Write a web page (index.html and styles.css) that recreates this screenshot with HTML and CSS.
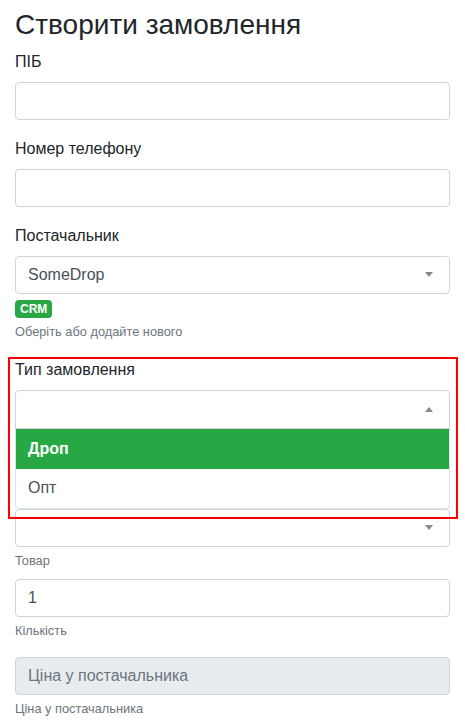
FILE: index.html
```html
<!DOCTYPE html>
<html lang="uk">
<head>
<meta charset="utf-8">
<title>Створити замовлення</title>
<link rel="stylesheet" href="styles.css">
</head>
<body>
<div class="container">
  <h3 class="title">Створити замовлення</h3>

  <div class="form-group">
    <label class="label">ПІБ</label>
    <input class="form-control" type="text">
  </div>

  <div class="form-group">
    <label class="label">Номер телефону</label>
    <input class="form-control" type="text">
  </div>

  <div class="form-group">
    <label class="label">Постачальник</label>
    <div class="select">
      <span class="select-value">SomeDrop</span>
      <span class="arrow arrow-down"></span>
    </div>
    <div class="badge-row"><span class="badge">CRM</span></div>
    <small class="form-text">Оберіть або додайте нового</small>
  </div>

  <div class="form-group group-type">
    <label class="label">Тип замовлення</label>
    <div class="select select-open">
      <span class="select-value"></span>
      <span class="arrow arrow-up"></span>
      <ul class="dropdown">
        <li class="option option-active">Дроп</li>
        <li class="option option-last">Опт</li>
      </ul>
    </div>
  </div>

  <div class="form-group group-product">
    <div class="select">
      <span class="select-value"></span>
      <span class="arrow arrow-down"></span>
    </div>
    <small class="form-text">Товар</small>
  </div>

  <div class="form-group">
    <input class="form-control" type="text" value="1">
    <small class="form-text">Кількість</small>
  </div>

  <div class="form-group">
    <input class="form-control" type="text" placeholder="Ціна у постачальника" disabled>
    <small class="form-text">Ціна у постачальника</small>
  </div>

  <div class="highlight"></div>
</div>
</body>
</html>
```

FILE: styles.css
```css
* { box-sizing: border-box; }

html, body {
  margin: 0;
  padding: 0;
  background: #fff;
}

body {
  font-family: "Liberation Sans", Arial, sans-serif;
  font-size: 16px;
  line-height: 1.5;
  color: #212529;
  overflow: hidden;
}

.container {
  position: relative;
  padding: 8px 15px 0;
}

.title {
  margin: 0 0 8px;
  font-size: 28px;
  font-weight: 400;
  line-height: 1.2;
  color: #212529;
}

.form-group {
  margin-bottom: 17px;
}

.label {
  display: block;
  margin-bottom: 8px;
  line-height: 24px;
}

.form-control {
  display: block;
  width: 100%;
  height: 38px;
  padding: 6px 12px;
  font-family: inherit;
  font-size: 16px;
  line-height: 24px;
  color: #495057;
  background: #fff;
  border: 1px solid #ced4da;
  border-radius: 4px;
  outline: none;
}

.form-control::placeholder {
  color: #6c757d;
  opacity: 1;
}

.form-control:disabled {
  background: #e9ecef;
}

.select {
  position: relative;
  display: flex;
  align-items: center;
  height: 38px;
  padding: 0 12px;
  border: 1px solid #ced4da;
  border-radius: 4px;
  background: #fff;
}

.select-open {
  height: 39px;
  border-bottom-left-radius: 0;
  border-bottom-right-radius: 0;
}

.select-value {
  flex: 1;
  color: #495057;
  line-height: 24px;
}

.arrow {
  width: 0;
  height: 0;
  margin-right: 4px;
  border-left: 4px solid transparent;
  border-right: 4px solid transparent;
}

.arrow-down {
  border-top: 5px solid #888;
}

.arrow-up {
  border-bottom: 5px solid #888;
}

.dropdown {
  position: absolute;
  left: -1px;
  right: -1px;
  top: 100%;
  margin: 1px 0 0;
  padding: 0;
  list-style: none;
  background: #fff;
  border: 1px solid #dfe2e5;
  border-top: 0;
  border-radius: 0 0 4px 4px;
  z-index: 5;
}

.option {
  height: 40px;
  padding: 8px 12px;
  line-height: 24px;
  color: #495057;
}

.option-last {
  height: 39px;
  padding-top: 7px;
}

.option-active {
  background: #28a745;
  color: #fff;
  font-weight: 700;
}

.badge-row {
  display: flex;
  margin-top: 6px;
}

.badge {
  display: inline-block;
  padding: 3px 5px;
  font-size: 12px;
  font-weight: 700;
  line-height: 12px;
  color: #fff;
  background: #28a745;
  border-radius: 4px;
}

.form-text {
  display: block;
  margin-top: 4px;
  font-size: 12.8px;
  line-height: 19.2px;
  color: #6c757d;
}

.group-type {
  margin-bottom: 0;
}

.group-product {
  margin-top: 80px;
  margin-bottom: 9px;
}

.highlight {
  position: absolute;
  left: 8px;
  top: 357px;
  width: 450px;
  height: 162px;
  border: 2px solid #f00;
  pointer-events: none;
  z-index: 10;
}
```
